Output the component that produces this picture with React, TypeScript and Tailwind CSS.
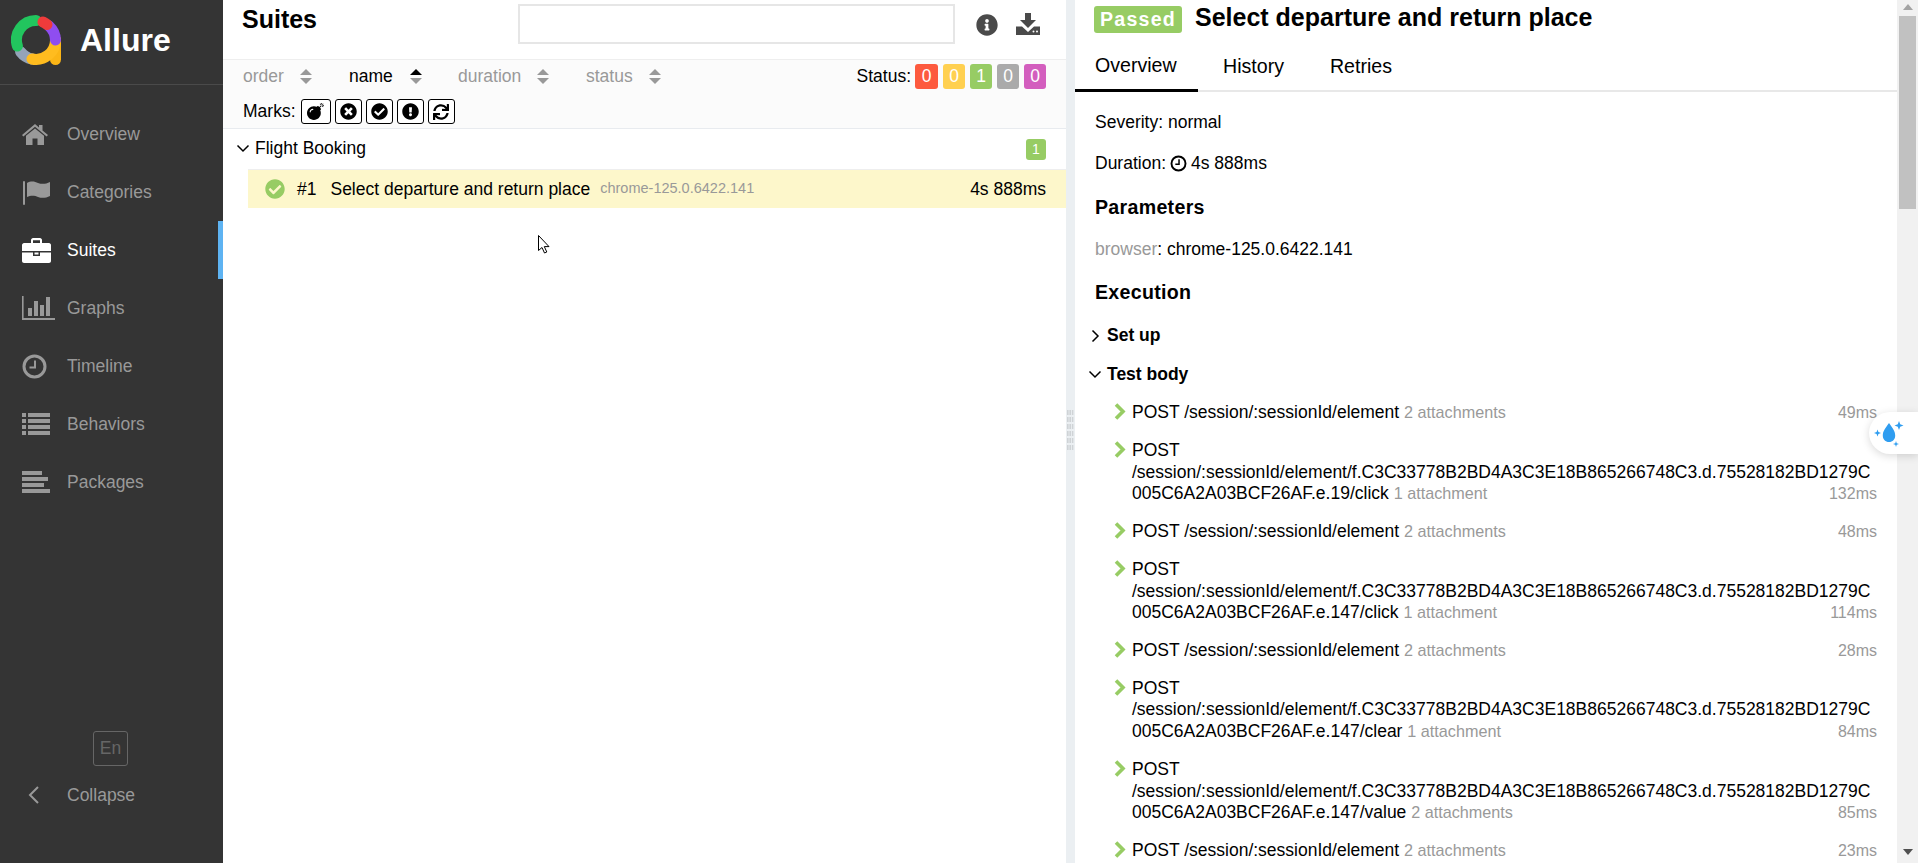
import React from 'react';
import { FaBomb, FaTimesCircle, FaCheckCircle, FaExclamationCircle, FaSync, FaInfoCircle } from 'react-icons/fa';

const navItems = [
  { name: 'Overview', icon: 'home' },
  { name: 'Categories', icon: 'flag' },
  { name: 'Suites', icon: 'briefcase', active: true },
  { name: 'Graphs', icon: 'chart' },
  { name: 'Timeline', icon: 'clock' },
  { name: 'Behaviors', icon: 'list' },
  { name: 'Packages', icon: 'packages' },
];

const elementUrl = '/session/:sessionId/element/f.C3C33778B2BD4A3C3E18B865266748C3.d.75528182BD1279C005C6A2A03BCF26AF';

const steps = [
  { name: 'POST /session/:sessionId/element', note: '2 attachments', time: '49ms' },
  { name: `POST ${elementUrl}.e.19/click`, note: '1 attachment', time: '132ms' },
  { name: 'POST /session/:sessionId/element', note: '2 attachments', time: '48ms' },
  { name: `POST ${elementUrl}.e.147/click`, note: '1 attachment', time: '114ms' },
  { name: 'POST /session/:sessionId/element', note: '2 attachments', time: '28ms' },
  { name: `POST ${elementUrl}.e.147/clear`, note: '1 attachment', time: '84ms' },
  { name: `POST ${elementUrl}.e.147/value`, note: '2 attachments', time: '85ms' },
  { name: 'POST /session/:sessionId/element', note: '2 attachments', time: '23ms' },
];

const NavIcon = ({ icon }: { icon: string }) => {
  if (icon === 'home') {
    return (
      <svg width="26" height="21" viewBox="0 0 26 21" fill="currentColor">
        <path d="M13 0 L17 3.4 V1 H20.5 V6.4 L26 11 L24.6 12.4 L13 2.8 L1.4 12.4 L0 11 Z" />
        <path d="M13 4.4 L22 11.8 V21 H15.5 V14.5 H10.5 V21 H4 V11.8 Z" />
      </svg>
    );
  }
  if (icon === 'flag') {
    return (
      <svg width="28" height="25" viewBox="0 0 28 25" fill="currentColor">
        <rect x="1" y="1" width="2" height="24" rx="1" />
        <path d="M5 3 C9 0.5 13 1.5 16 3 C20 4.5 24 4 28 2 V16 C24 18 20 18.5 16 17 C13 15.5 9 15 5 17 Z" />
      </svg>
    );
  }
  if (icon === 'briefcase') {
    return (
      <svg width="29" height="25" viewBox="0 0 29 25" fill="currentColor">
        <path fillRule="evenodd" d="M9 5 V2 C9 1 10 0 11 0 H18 C19 0 20 1 20 2 V5 H27 C28 5 29 6 29 7 V13 H0 V7 C0 6 1 5 2 5 Z M11 5 H18 V2.2 H11 Z" />
        <path d="M0 14.5 H11 V18 H18 V14.5 H29 V23 C29 24 28 25 27 25 H2 C1 25 0 24 0 23 Z" />
        <rect x="12.5" y="14.5" width="4" height="2" />
      </svg>
    );
  }
  if (icon === 'chart') {
    return (
      <svg width="33" height="24" viewBox="0 0 33 24" fill="currentColor">
        <path d="M0 0 H1.6 V22 H33 V24 H0 Z" />
        <rect x="6" y="12" width="4" height="8" />
        <rect x="12" y="5" width="4" height="15" />
        <rect x="18" y="9" width="4" height="11" />
        <rect x="24" y="1" width="4" height="19" />
      </svg>
    );
  }
  if (icon === 'clock') {
    return (
      <svg width="25" height="25" viewBox="0 0 25 25" fill="none" stroke="currentColor">
        <circle cx="12.5" cy="12.5" r="10.5" strokeWidth="3" />
        <path d="M13 6.5 V13.5 H7.5" strokeWidth="2" />
      </svg>
    );
  }
  if (icon === 'list') {
    return (
      <svg width="28" height="22" viewBox="0 0 28 22" fill="currentColor">
        <rect x="0" y="0" width="4" height="4" />
        <rect x="6" y="0" width="22" height="4" />
        <rect x="0" y="6" width="4" height="4" />
        <rect x="6" y="6" width="22" height="4" />
        <rect x="0" y="12" width="4" height="4" />
        <rect x="6" y="12" width="22" height="4" />
        <rect x="0" y="18" width="4" height="4" />
        <rect x="6" y="18" width="22" height="4" />
      </svg>
    );
  }
  return (
    <svg width="28" height="22" viewBox="0 0 28 22" fill="currentColor">
      <rect x="0" y="0" width="20" height="4" />
      <rect x="0" y="6" width="26" height="4" />
      <rect x="0" y="12" width="22" height="4" />
      <rect x="0" y="18" width="28" height="4" />
    </svg>
  );
};

const Logo = () => (
  <svg width="50" height="50" viewBox="0 0 50 50" fill="none" strokeWidth="11" strokeLinecap="round">
    <path d="M9.6 36.8 A19.5 19.5 0 0 0 21 44" stroke="#94a3b8" />
    <path d="M44.5 25 V44.5" stroke="#fbb516" />
    <path d="M21 44 A19.5 19.5 0 0 0 44.5 25" stroke="#ffbc1f" />
    <path d="M6.4 31 A19.5 19.5 0 0 1 25 5.5" stroke="#22c55e" />
    <path d="M38 11 A19.5 19.5 0 0 1 44.5 25" stroke="#8f4df0" />
    <path d="M32 7 A19.5 19.5 0 0 1 36 9.5" stroke="#ef3b3b" />
  </svg>
);

const SortArrows = ({ up }: { up?: boolean }) => (
  <svg width="12" height="15" viewBox="0 0 12 15">
    <path d="M6 0 L12 6 H0 Z" fill={up ? '#000' : '#999'} />
    <path d="M6 15 L12 9 H0 Z" fill="#999" />
  </svg>
);

const Chevron = ({ open, className }: { open?: boolean; className?: string }) => (
  <svg width="14" height="14" viewBox="0 0 14 14" fill="none" stroke="currentColor" strokeWidth="1.5" className={className}>
    <path d={open ? 'M1.5 4.5 L7 10 L12.5 4.5' : 'M4.5 1.5 L10 7 L4.5 12.5'} />
  </svg>
);

const SuitesPane = () => (
  <div className="flex w-[843px] flex-col">
    <div className="flex h-[60px] items-start border-b border-[#eeeeee] pl-[19px]">
      <h2 className="mt-1 w-[74px] text-[25px] leading-[30px] font-bold text-black">Suites</h2>
      <div className="mt-1 ml-[202px] h-10 w-[437px] border-2 border-[#e6e6e6] bg-white" />
      <div className="mt-[14px] ml-[21px] text-[#4a4a4a]">
        <FaInfoCircle size={22} />
      </div>
      <svg width="24" height="22" viewBox="0 0 24 22" fill="#4a4a4a" className="mt-[13px] ml-[18px]">
        <path d="M9 0 H15 V7 H20 L12 15 L4 7 H9 Z" />
        <path d="M0 13.5 H6 L12 19 L18 13.5 H24 V22 H0 Z" />
        <circle cx="17.5" cy="18.5" r="1" fill="#fff" />
        <circle cx="21" cy="18.5" r="1" fill="#fff" />
      </svg>
    </div>
    <div className="h-[69px] border-b border-[#e8ebef] bg-[#fbfbfb] pl-5 text-[17.5px]">
      <div className="flex h-[33px] items-center pr-5">
        <div className="flex w-[106px] items-center gap-4 text-[#999999]">order <SortArrows /></div>
        <div className="flex w-[109px] items-center gap-[17px] text-black">name <SortArrows up /></div>
        <div className="flex w-[128px] items-center gap-4 text-[#999999]">duration <SortArrows /></div>
        <div className="flex items-center gap-4 text-[#999999]">status <SortArrows /></div>
        <div className="ml-auto flex items-center gap-[5px]">
          <span className="mr-[-1px] text-black">Status:</span>
          {[
            ['0', 'bg-[#fd5a3e]', 'w-[23px]'],
            ['0', 'bg-[#ffd050]', 'w-[22px]'],
            ['1', 'bg-[#97cc64]', 'w-[22px]'],
            ['0', 'bg-[#aaaaaa]', 'w-[22px]'],
            ['0', 'bg-[#d35ebe]', 'w-[22px]'],
          ].map(([n, bg, w], i) => (
            <span key={i} className={`flex h-[25px] items-center justify-center rounded-[3px] text-white ${bg} ${w}`}>{n}</span>
          ))}
        </div>
      </div>
      <div className="mt-1 flex h-[29px] items-center text-black">
        <span className="mr-[5px]">Marks:</span>
        <div className="flex items-center gap-[4px]">
          <span className="flex h-[25px] w-[30px] items-center justify-center rounded-[3px] border border-black bg-white"><FaBomb size={17} /></span>
          <span className="flex h-[25px] w-[27px] items-center justify-center rounded-[3px] border border-black bg-white"><FaTimesCircle size={17} /></span>
          <span className="flex h-[25px] w-[27px] items-center justify-center rounded-[3px] border border-black bg-white"><FaCheckCircle size={17} /></span>
          <span className="flex h-[25px] w-[27px] items-center justify-center rounded-[3px] border border-black bg-white"><FaExclamationCircle size={17} /></span>
          <span className="flex h-[25px] w-[27px] items-center justify-center rounded-[3px] border border-black bg-white"><FaSync size={16} /></span>
        </div>
      </div>
    </div>
    <div className="text-[17.5px] text-black">
      <div className="flex h-10 items-center pr-5 pl-[13px]">
        <Chevron open className="mr-[5px] mb-[2px]" />
        <span className="mb-[2px]">Flight Booking</span>
        <span className="ml-auto flex h-[21px] w-5 items-center justify-center rounded-[3px] bg-[#97cc64] text-[14px] text-white">1</span>
      </div>
      <div className="ml-[25px] flex h-[39px] items-center border-t border-[#eeeeee] bg-[#fdf7cb] pr-5 pl-[17px]">
        <FaCheckCircle size={20} className="text-[#97cc64]" />
        <span className="ml-[12px]">#1</span>
        <span className="ml-[14px]">Select departure and return place</span>
        <span className="ml-[10px] text-[14.5px] text-[#999999]">chrome-125.0.6422.141</span>
        <span className="ml-auto">4s 888ms</span>
      </div>
    </div>
  </div>
);

const Gutter = () => (
  <div className="flex w-[9px] items-center justify-center bg-[#ebeff2]">
    <svg width="7" height="40" viewBox="0 0 7 40" fill="#cfd3d6" className="mt-[-3px]">
      <pattern id="grip" width="2.4" height="7" patternUnits="userSpaceOnUse">
        <rect width="1.6" height="5" />
      </pattern>
      <rect width="7" height="40" fill="url(#grip)" />
    </svg>
  </div>
);

const DetailPane = () => (
  <div className="min-w-0 flex-1 overflow-hidden text-[17.5px] leading-[21.875px] text-black">
    <div className="flex h-[39px] items-center pl-[19px]">
      <span className="flex h-[27px] w-[88px] items-center justify-center rounded-[3px] bg-[#97cc64] text-[19.6px] font-bold tracking-[1.2px] text-white">Passed</span>
      <h2 className="mt-[-3px] ml-[13px] text-[25px] font-bold">Select departure and return place</h2>
    </div>
    <div className="flex h-[53px] border-b-2 border-[#e8e8e8] text-[19.6px]">
      <div className="mb-[-2px] flex w-[123px] items-center border-b-[3px] border-black pt-1 pl-5">Overview</div>
      <div className="ml-[25px] flex items-center pt-1">History</div>
      <div className="ml-[46px] flex items-center pt-1">Retries</div>
    </div>
    <div className="pl-5">
      <div className="mt-5">Severity: normal</div>
      <div className="mt-[19px] flex items-center">
        Duration:
        <svg width="17" height="17" viewBox="0 0 16 16" fill="none" stroke="currentColor" className="mr-[4px] ml-[4px]">
          <circle cx="8" cy="8" r="6.6" strokeWidth="1.8" />
          <path d="M8.5 4 V8.7 H5" strokeWidth="1.4" />
        </svg>
        4s 888ms
      </div>
      <h3 className="mt-5 text-[19.6px] leading-6 font-bold tracking-[0.3px]">Parameters</h3>
      <div className="mt-5"><span className="text-[#999999]">browser</span>: chrome-125.0.6422.141</div>
      <h3 className="mt-[19px] text-[19.6px] leading-6 font-bold tracking-[0.3px]">Execution</h3>
    </div>
    <div className="mt-[21px] flex items-center pl-[14px] font-bold">
      <Chevron className="mr-[5px] ml-[-1px]" />
      Set up
    </div>
    <div className="mt-[17px] flex items-center pl-[14px] font-bold">
      <Chevron open className="mr-[5px] ml-[-1px]" />
      Test body
    </div>
    <div className="mt-[9px] pr-[20px] pl-[39px] leading-[21.7px]">
      {steps.map((step, i) => (
        <div key={i} className="relative flex py-2">
          <svg width="12" height="17" viewBox="0 0 12 17" fill="none" stroke="#97cc64" strokeWidth="3.6" className="mt-[1px] shrink-0">
            <path d="M2 1.5 L9 8.5 L2 15.5" />
          </svg>
          <div className="ml-[6px] min-w-0 flex-1 pr-[2px] [overflow-wrap:anywhere]">
            {step.name} <span className="text-[16.2px] text-[#999999]">{step.note}</span>
          </div>
          <span className="absolute right-0 bottom-2 text-[16px] text-[#999999]">{step.time}</span>
        </div>
      ))}
    </div>
  </div>
);

const Scrollbar = () => (
  <div className="flex w-[21px] flex-col items-center bg-[#f1f1f1]">
    <svg width="10" height="6" viewBox="0 0 10 6" fill="#a3a3a3" className="mt-[4px] mb-[6px]">
      <path d="M5 0 L10 6 H0 Z" />
    </svg>
    <div className="h-[193px] w-[17px] bg-[#c1c1c1]" />
    <svg width="10" height="6" viewBox="0 0 10 6" fill="#505050" className="mt-auto mb-[8px]">
      <path d="M0 0 H10 L5 6 Z" />
    </svg>
  </div>
);

export default function App() {
  return (
    <div className="relative flex h-[863px] w-[1918px] overflow-hidden bg-white [font-family:'Liberation_Sans',Arial,sans-serif]">
      <aside className="flex w-[223px] shrink-0 flex-col bg-[#343434] text-[17.5px] text-[#999999]">
        <div className="flex h-[85px] items-start border-b border-[#4a4a4a] pl-[11px]">
          <div className="mt-[15px]"><Logo /></div>
          <span className="mt-[20px] ml-[19px] text-[32px] leading-[40px] font-bold text-white">Allure</span>
        </div>
        <nav className="mt-5">
          {navItems.map((item) => (
            <div key={item.name} className={`flex h-[58px] items-center border-r-[5px] ${item.active ? 'border-[#5eb3f2] text-white' : 'border-transparent'}`}>
              <div className="flex w-[67px] shrink-0 pl-[22px]"><NavIcon icon={item.icon} /></div>
              <span>{item.name}</span>
            </div>
          ))}
        </nav>
        <div className="mt-auto pb-[55px]">
          <div className="ml-[93px] flex h-[35px] w-[35px] items-center justify-center rounded-[3px] border border-[#666666] text-[#666666]">En</div>
          <div className="mt-4 flex items-center pl-[28px]">
            <svg width="12" height="18" viewBox="0 0 12 18" fill="none" stroke="#999999" strokeWidth="2" className="mr-[27px]">
              <path d="M10 1 L2 9 L10 17" />
            </svg>
            Collapse
          </div>
        </div>
      </aside>
      <SuitesPane />
      <Gutter />
      <DetailPane />
      <Scrollbar />
      {/* floating translate widget and the mouse pointer sit on top of the page */}
      <div className="absolute top-[412px] right-0 flex h-[42px] w-[49px] items-center rounded-l-[21px] bg-white pl-[5px] shadow-[0_2px_8px_rgba(0,0,0,0.15)]">
        <svg width="30" height="30" viewBox="0 0 30 30" fill="#2f9df0">
          <path d="M15 5 C18.5 10 21.2 13 21.2 17.5 C21.2 21.5 18.5 24 15 24 C11.5 24 8.8 21.5 8.8 17.5 C8.8 13 11.5 10 15 5 Z" />
          <path d="M25 3 L26.2 6.3 L29.5 7.5 L26.2 8.7 L25 12 L23.8 8.7 L20.5 7.5 L23.8 6.3 Z" />
          <path d="M3.5 11.5 L4.4 14.1 L7 15 L4.4 15.9 L3.5 18.5 L2.6 15.9 L0 15 L2.6 14.1 Z" />
          <path d="M22 23 L22.7 25.3 L25 26 L22.7 26.7 L22 29 L21.3 26.7 L19 26 L21.3 25.3 Z" />
        </svg>
      </div>
      <svg width="12" height="19" viewBox="0 0 12 19" className="absolute top-[235px] left-[538px]">
        <path d="M0.5 0.5 V15.5 L4 12.5 L6.5 18 L8.8 17 L6.3 11.6 H11 Z" fill="#fff" stroke="#000" />
      </svg>
    </div>
  );
}
